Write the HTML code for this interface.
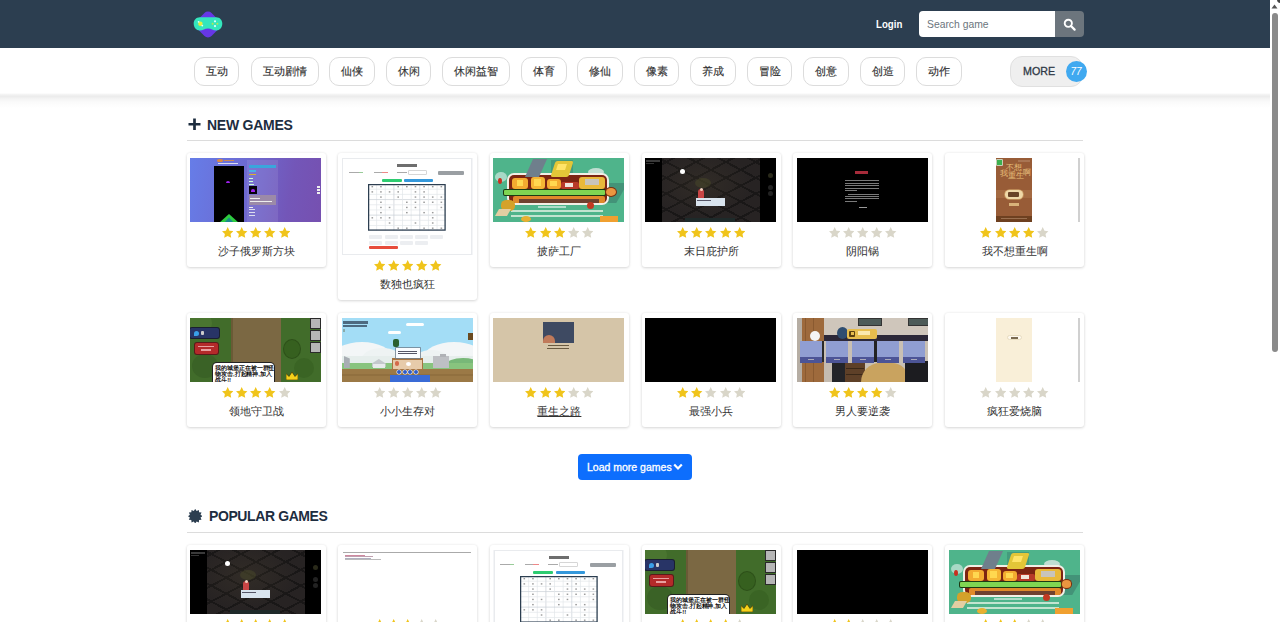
<!DOCTYPE html><html><head><meta charset="utf-8"><title>Games</title><style>
*{box-sizing:border-box}
html,body{margin:0;padding:0}
body{width:1280px;height:622px;overflow:hidden;position:relative;background:#fff;font-family:"Liberation Sans",sans-serif;}
i{position:absolute;display:block}
.nav{position:absolute;left:0;top:0;width:1270px;height:48px;background:#2c3e50}
.login{position:absolute;left:876px;top:18px;font-size:10.5px;font-weight:bold;color:#fff;transform:scaleX(.92);transform-origin:0 0}
.search{position:absolute;left:919px;top:11px;width:136px;height:26px;background:#fff;border-radius:4px 0 0 4px}
.search span{position:absolute;left:8px;top:6.5px;font-size:11px;color:#6c757d;transform:scaleX(.94);transform-origin:0 0}
.sbtn{position:absolute;left:1055px;top:11px;width:28.5px;height:26px;background:#6c757d;border-radius:0 4px 4px 0}
.cats{position:absolute;left:0;top:48px;width:1270px;height:47px;background:#fff}
.shadow{position:absolute;left:0;top:93px;width:1270px;height:15px;background:linear-gradient(#fff 0px,#f0f0f0 2px,#ececec 3.5px,#f4f4f4 6px,#fafafa 9px,#fff 15px)}
.tag{position:absolute;top:57px;height:29px;border:1px solid #dcdcdc;border-radius:10px;font-size:10.6px;color:#333;-webkit-text-stroke:.15px #333;text-align:center;line-height:27px;background:#fff}
.more{position:absolute;left:1010px;top:56px;width:73px;height:30.5px;border:1px solid #e0e0e0;border-radius:12px;background:#efefef;font-size:12px;color:#333}
.more span{position:absolute;left:12px;top:7.6px;font-size:10.7px;color:#2f3946;-webkit-text-stroke:.3px #2f3946}
.badge{position:absolute;left:1065.5px;top:61px;width:21px;height:21px;border-radius:50%;background:#40a9f0;color:#fff;font-size:10px;font-style:italic;text-align:center;line-height:21px}
.h{position:absolute;font-size:14px;font-weight:bold;color:#1d2d3f;letter-spacing:-0.25px}
.hr{position:absolute;left:187px;width:896px;height:1px;background:#dcdcdc}
.card{position:absolute;width:139px;background:#fff;border-radius:3px;box-shadow:0 1px 3px rgba(0,0,0,.14),0 0 3px rgba(0,0,0,.06)}
.th{position:absolute;left:3.6px;top:5px;width:131px;overflow:hidden}
.st{position:absolute;left:0;right:0;height:11px;text-align:center;font-size:0;line-height:0}
.st svg{margin:0 1.4px}
.tt{position:absolute;left:0;right:0;text-align:center;font-size:11px;color:#333;line-height:14px}
.u{text-decoration:underline}
.lm{position:absolute;left:578px;top:454px;width:113.5px;height:26px;background:#0d6efd;border-radius:4px;color:#fff;font-size:10.5px}
.lm span{position:absolute;left:9px;top:6.5px;letter-spacing:0px;-webkit-text-stroke:.3px #fff}
.sb{position:absolute;left:1270px;top:0;width:10px;height:622px;background:#fff}
</style></head><body><div class="nav"></div><svg style="position:absolute;left:192px;top:9px" width="32" height="31" viewBox="0 0 32 31">
<rect x="5.4" y="4.9" width="21.2" height="21.2" rx="5" ry="5" transform="rotate(45 16 15.5)" fill="#6637e6"/>
<path d="M7.8 8.2 H24.2 C27.9 8.2 30.3 11.1 30.3 14.6 C30.3 18.4 27.8 21.6 24.3 21.6 C20.8 21.6 19.5 19.4 16 19.4 C12.5 19.4 11.2 21.6 7.7 21.6 C4.2 21.6 1.7 18.4 1.7 14.6 C1.7 11.1 4.1 8.2 7.8 8.2Z" fill="#34e6bd"/>
<circle cx="8.4" cy="14.7" r="2.2" fill="#e6ee3a"/><circle cx="6.6" cy="12.8" r=".9" fill="#dff"/><circle cx="10.3" cy="16.6" r=".9" fill="#dff"/>
<circle cx="23" cy="12.3" r="1.1" fill="#dff"/><circle cx="23" cy="17.1" r="1.1" fill="#dff"/><circle cx="20.6" cy="14.7" r="1" fill="#b8e850"/><circle cx="25.4" cy="14.7" r="1" fill="#b8e850"/>
</svg><div class="login">Login</div><div class="search"><span>Search game</span></div><div class="sbtn"><svg style="position:absolute;left:8px;top:7px" width="13" height="13" viewBox="0 0 13 13"><circle cx="5.3" cy="5.3" r="3.6" fill="none" stroke="#fff" stroke-width="1.9"/><path d="M8 8l3.6 3.6" stroke="#fff" stroke-width="2.2" stroke-linecap="round"/></svg></div><div class="cats"></div><div class="shadow"></div><div class="tag" style="left:194px;width:45px">互动</div><div class="tag" style="left:250.5px;width:68px">互动剧情</div><div class="tag" style="left:329px;width:45.5px">仙侠</div><div class="tag" style="left:386px;width:45px">休闲</div><div class="tag" style="left:442px;width:68px">休闲益智</div><div class="tag" style="left:521px;width:45.5px">体育</div><div class="tag" style="left:577px;width:45.5px">修仙</div><div class="tag" style="left:634px;width:45px">像素</div><div class="tag" style="left:690px;width:45.5px">养成</div><div class="tag" style="left:747px;width:45px">冒险</div><div class="tag" style="left:803px;width:45.5px">创意</div><div class="tag" style="left:860px;width:45px">创造</div><div class="tag" style="left:916px;width:45.5px">动作</div><div class="more"><span>MORE</span></div><div class="badge">77</div><svg style="position:absolute;left:187.5px;top:118px" width="13" height="12.5" viewBox="0 0 13 12.5"><path d="M6.5 0.5V12M0.5 6.25H12.5" stroke="#1d2d3f" stroke-width="2.7"/></svg><div class="h" style="left:207px;top:116.5px">NEW GAMES</div><div class="hr" style="top:140px"></div><div class="card" style="left:186.5px;top:153px;height:113.5px"><div class="th" style="height:64px"><div style="position:absolute;inset:0;background:linear-gradient(100deg,#667de8 0%,#6d6bd2 40%,#7356b8 75%,#7650b0 100%)"></div><i style="left:24px;top:8px;width:30px;height:56px;background:#000;"></i><i style="left:56.5px;top:1.5px;width:31px;height:62px;background:rgba(255,255,255,.09);"></i><i style="left:58.5px;top:6.5px;width:27px;height:3.3px;background:#3aa6dc;"></i><i style="left:58.5px;top:11.5px;width:7px;height:2px;background:#4ab0e8;"></i><i style="left:58.5px;top:15.5px;width:7px;height:1.5px;background:#d8b030;"></i><i style="left:58.5px;top:19.5px;width:4px;height:1px;background:#cfd;"></i><i style="left:58.5px;top:22.5px;width:4px;height:1px;background:#cfd;"></i><i style="left:58.5px;top:25.5px;width:5px;height:1px;background:#cfd;"></i><i style="left:58.5px;top:27.5px;width:8.5px;height:8.3px;background:#05020a;"></i><i style="left:61px;top:31px;width:4px;height:2.5px;background:#a020f0;border-radius:2px 2px 0 0"></i><i style="left:58.5px;top:37.2px;width:27px;height:9.5px;background:#9c8aa8;"></i><i style="left:60px;top:39.5px;width:10px;height:1.2px;background:#eee;"></i><i style="left:60px;top:42.5px;width:22px;height:1.2px;background:#eee;"></i><i style="left:58.5px;top:48.5px;width:4px;height:1px;background:#eee;"></i><i style="left:58.5px;top:51px;width:6px;height:1px;background:#dde;"></i><i style="left:58.5px;top:54px;width:6px;height:1px;background:#dde;"></i><i style="left:58.5px;top:57px;width:6px;height:1px;background:#dde;"></i><i style="left:35.5px;top:22.5px;width:4.5px;height:2.5px;background:#a020f0;border-radius:2px 2px 0 0"></i><svg style="position:absolute;left:29px;top:55.5px" width="20" height="9"><path d="M10 0L20 9H0z" fill="#2ecc40"/><path d="M10 3.5L15 9H5z" fill="#1a8a8a"/></svg><i style="left:27px;top:1px;width:6px;height:3px;background:#e08a40;border-radius:50%"></i><i style="left:34px;top:1.5px;width:10px;height:1.5px;background:#d08a50;"></i><i style="left:28px;top:4.5px;width:20px;height:0.8px;background:#dde;"></i><i style="left:127px;top:28px;width:3px;height:1.5px;background:#eee;"></i><i style="left:127px;top:31px;width:3px;height:1.5px;background:#eee;"></i><i style="left:127px;top:34px;width:3px;height:1.5px;background:#eee;"></i></div><div class="st" style="top:74px"><svg width="11.4" height="11" viewBox="0 0 24 23"><path d="M12 0l3.7 7.6 8.3 1.1-6.1 5.8 1.5 8.3L12 18.8l-7.4 4 1.5-8.3L0 8.7l8.3-1.1z" fill="#f0c41b"/></svg><svg width="11.4" height="11" viewBox="0 0 24 23"><path d="M12 0l3.7 7.6 8.3 1.1-6.1 5.8 1.5 8.3L12 18.8l-7.4 4 1.5-8.3L0 8.7l8.3-1.1z" fill="#f0c41b"/></svg><svg width="11.4" height="11" viewBox="0 0 24 23"><path d="M12 0l3.7 7.6 8.3 1.1-6.1 5.8 1.5 8.3L12 18.8l-7.4 4 1.5-8.3L0 8.7l8.3-1.1z" fill="#f0c41b"/></svg><svg width="11.4" height="11" viewBox="0 0 24 23"><path d="M12 0l3.7 7.6 8.3 1.1-6.1 5.8 1.5 8.3L12 18.8l-7.4 4 1.5-8.3L0 8.7l8.3-1.1z" fill="#f0c41b"/></svg><svg width="11.4" height="11" viewBox="0 0 24 23"><path d="M12 0l3.7 7.6 8.3 1.1-6.1 5.8 1.5 8.3L12 18.8l-7.4 4 1.5-8.3L0 8.7l8.3-1.1z" fill="#f0c41b"/></svg></div><div class="tt" style="top:91px">沙子俄罗斯方块</div></div><div class="card" style="left:338.2px;top:153px;height:146.5px"><div class="th" style="height:97px"><div style="position:absolute;inset:0;background:#f4f5f7"></div><i style="left:1.5px;top:1px;width:127.5px;height:94.5px;background:#fff;box-shadow:0 0 0 1px #e9ebee"></i><i style="left:55.5px;top:6px;width:20px;height:3px;background:#555;opacity:.85"></i><i style="left:7px;top:14px;width:10px;height:1.2px;background:#aaa;"></i><i style="left:17px;top:14px;width:4px;height:1.2px;background:#9c9;"></i><i style="left:32px;top:14px;width:8px;height:1.2px;background:#aaa;"></i><i style="left:40px;top:14px;width:6px;height:1.2px;background:#e88;"></i><i style="left:55px;top:13.8px;width:10px;height:1.2px;background:#aaa;"></i><i style="left:67px;top:12.8px;width:17px;height:3.5px;background:#fff;box-shadow:0 0 0 .6px #bbb"></i><i style="left:96.7px;top:13.4px;width:26px;height:3.3px;background:#9a9fa3;border-radius:1px"></i><i style="left:40px;top:20.7px;width:20px;height:3.4px;background:#2ecc71;border-radius:1px"></i><i style="left:62.4px;top:20.7px;width:28.7px;height:3.4px;background:#3498db;border-radius:1px"></i><svg style="position:absolute;left:26.6px;top:26.3px" width="77.7" height="46.7" viewBox="0 0 77.7 46.7"><rect width="77.7" height="46.7" fill="#fff"/><line x1="8.63" y1="0" x2="8.63" y2="46.7" stroke="#e3e6ea" stroke-width=".7"/><line x1="0" y1="5.19" x2="77.7" y2="5.19" stroke="#e3e6ea" stroke-width=".7"/><line x1="17.27" y1="0" x2="17.27" y2="46.7" stroke="#e3e6ea" stroke-width=".7"/><line x1="0" y1="10.38" x2="77.7" y2="10.38" stroke="#e3e6ea" stroke-width=".7"/><line x1="25.90" y1="0" x2="25.90" y2="46.7" stroke="#c9ced6" stroke-width=".7"/><line x1="0" y1="15.57" x2="77.7" y2="15.57" stroke="#c9ced6" stroke-width=".7"/><line x1="34.53" y1="0" x2="34.53" y2="46.7" stroke="#e3e6ea" stroke-width=".7"/><line x1="0" y1="20.76" x2="77.7" y2="20.76" stroke="#e3e6ea" stroke-width=".7"/><line x1="43.17" y1="0" x2="43.17" y2="46.7" stroke="#e3e6ea" stroke-width=".7"/><line x1="0" y1="25.94" x2="77.7" y2="25.94" stroke="#e3e6ea" stroke-width=".7"/><line x1="51.80" y1="0" x2="51.80" y2="46.7" stroke="#c9ced6" stroke-width=".7"/><line x1="0" y1="31.13" x2="77.7" y2="31.13" stroke="#c9ced6" stroke-width=".7"/><line x1="60.43" y1="0" x2="60.43" y2="46.7" stroke="#e3e6ea" stroke-width=".7"/><line x1="0" y1="36.32" x2="77.7" y2="36.32" stroke="#e3e6ea" stroke-width=".7"/><line x1="69.07" y1="0" x2="69.07" y2="46.7" stroke="#e3e6ea" stroke-width=".7"/><line x1="0" y1="41.51" x2="77.7" y2="41.51" stroke="#e3e6ea" stroke-width=".7"/><rect x="0.6" y="0.6" width="76.5" height="45.5" fill="none" stroke="#2c3e50" stroke-width="1.3"/><rect x="3.50" y="2.00" width="1.6" height="1.4" fill="#9a9a9a"/><rect x="12.13" y="2.00" width="1.6" height="1.4" fill="#9a9a9a"/><rect x="29.40" y="2.00" width="1.6" height="1.4" fill="#9a9a9a"/><rect x="38.03" y="2.00" width="1.6" height="1.4" fill="#9a9a9a"/><rect x="46.67" y="2.00" width="1.6" height="1.4" fill="#9a9a9a"/><rect x="55.30" y="2.00" width="1.6" height="1.4" fill="#9a9a9a"/><rect x="63.93" y="2.00" width="1.6" height="1.4" fill="#9a9a9a"/><rect x="72.57" y="2.00" width="1.6" height="1.4" fill="#9a9a9a"/><rect x="3.50" y="7.19" width="1.6" height="1.4" fill="#9a9a9a"/><rect x="12.13" y="7.19" width="1.6" height="1.4" fill="#9a9a9a"/><rect x="20.77" y="7.19" width="1.6" height="1.4" fill="#9a9a9a"/><rect x="29.40" y="7.19" width="1.6" height="1.4" fill="#9a9a9a"/><rect x="46.67" y="7.19" width="1.6" height="1.4" fill="#9a9a9a"/><rect x="55.30" y="7.19" width="1.6" height="1.4" fill="#9a9a9a"/><rect x="12.13" y="12.38" width="1.6" height="1.4" fill="#9a9a9a"/><rect x="29.40" y="12.38" width="1.6" height="1.4" fill="#9a9a9a"/><rect x="46.67" y="12.38" width="1.6" height="1.4" fill="#9a9a9a"/><rect x="55.30" y="12.38" width="1.6" height="1.4" fill="#9a9a9a"/><rect x="63.93" y="12.38" width="1.6" height="1.4" fill="#9a9a9a"/><rect x="72.57" y="12.38" width="1.6" height="1.4" fill="#9a9a9a"/><rect x="12.13" y="17.57" width="1.6" height="1.4" fill="#9a9a9a"/><rect x="38.03" y="17.57" width="1.6" height="1.4" fill="#9a9a9a"/><rect x="46.67" y="17.57" width="1.6" height="1.4" fill="#9a9a9a"/><rect x="55.30" y="17.57" width="1.6" height="1.4" fill="#9a9a9a"/><rect x="63.93" y="17.57" width="1.6" height="1.4" fill="#9a9a9a"/><rect x="72.57" y="17.57" width="1.6" height="1.4" fill="#9a9a9a"/><rect x="12.13" y="22.76" width="1.6" height="1.4" fill="#9a9a9a"/><rect x="20.77" y="22.76" width="1.6" height="1.4" fill="#9a9a9a"/><rect x="38.03" y="22.76" width="1.6" height="1.4" fill="#9a9a9a"/><rect x="46.67" y="22.76" width="1.6" height="1.4" fill="#9a9a9a"/><rect x="72.57" y="22.76" width="1.6" height="1.4" fill="#9a9a9a"/><rect x="12.13" y="27.94" width="1.6" height="1.4" fill="#9a9a9a"/><rect x="38.03" y="27.94" width="1.6" height="1.4" fill="#9a9a9a"/><rect x="55.30" y="27.94" width="1.6" height="1.4" fill="#9a9a9a"/><rect x="63.93" y="27.94" width="1.6" height="1.4" fill="#9a9a9a"/><rect x="3.50" y="33.13" width="1.6" height="1.4" fill="#9a9a9a"/><rect x="12.13" y="33.13" width="1.6" height="1.4" fill="#9a9a9a"/><rect x="20.77" y="33.13" width="1.6" height="1.4" fill="#9a9a9a"/><rect x="63.93" y="33.13" width="1.6" height="1.4" fill="#9a9a9a"/><rect x="20.77" y="38.32" width="1.6" height="1.4" fill="#9a9a9a"/><rect x="46.67" y="38.32" width="1.6" height="1.4" fill="#9a9a9a"/><rect x="63.93" y="38.32" width="1.6" height="1.4" fill="#9a9a9a"/><rect x="29.40" y="43.51" width="1.6" height="1.4" fill="#9a9a9a"/><rect x="38.03" y="43.51" width="1.6" height="1.4" fill="#9a9a9a"/><rect x="55.30" y="43.51" width="1.6" height="1.4" fill="#9a9a9a"/><rect x="63.93" y="43.51" width="1.6" height="1.4" fill="#9a9a9a"/><rect x="72.57" y="43.51" width="1.6" height="1.4" fill="#9a9a9a"/></svg><i style="left:27.7px;top:77px;width:13px;height:3.8px;background:#eceef1;border-radius:1px"></i><i style="left:42.9px;top:77px;width:13px;height:3.8px;background:#eceef1;border-radius:1px"></i><i style="left:58.099999999999994px;top:77px;width:13px;height:3.8px;background:#eceef1;border-radius:1px"></i><i style="left:73.3px;top:77px;width:13px;height:3.8px;background:#eceef1;border-radius:1px"></i><i style="left:88.5px;top:77px;width:13px;height:3.8px;background:#eceef1;border-radius:1px"></i><i style="left:27.7px;top:82.5px;width:13px;height:4px;background:#eceef1;border-radius:1px"></i><i style="left:42.9px;top:82.5px;width:13px;height:4px;background:#eceef1;border-radius:1px"></i><i style="left:58.099999999999994px;top:82.5px;width:13px;height:4px;background:#eceef1;border-radius:1px"></i><i style="left:73.3px;top:82.5px;width:13px;height:4px;background:#eceef1;border-radius:1px"></i><i style="left:27.7px;top:87.9px;width:29px;height:3.1px;background:#e74c3c;border-radius:1px"></i></div><div class="st" style="top:107px"><svg width="11.4" height="11" viewBox="0 0 24 23"><path d="M12 0l3.7 7.6 8.3 1.1-6.1 5.8 1.5 8.3L12 18.8l-7.4 4 1.5-8.3L0 8.7l8.3-1.1z" fill="#f0c41b"/></svg><svg width="11.4" height="11" viewBox="0 0 24 23"><path d="M12 0l3.7 7.6 8.3 1.1-6.1 5.8 1.5 8.3L12 18.8l-7.4 4 1.5-8.3L0 8.7l8.3-1.1z" fill="#f0c41b"/></svg><svg width="11.4" height="11" viewBox="0 0 24 23"><path d="M12 0l3.7 7.6 8.3 1.1-6.1 5.8 1.5 8.3L12 18.8l-7.4 4 1.5-8.3L0 8.7l8.3-1.1z" fill="#f0c41b"/></svg><svg width="11.4" height="11" viewBox="0 0 24 23"><path d="M12 0l3.7 7.6 8.3 1.1-6.1 5.8 1.5 8.3L12 18.8l-7.4 4 1.5-8.3L0 8.7l8.3-1.1z" fill="#f0c41b"/></svg><svg width="11.4" height="11" viewBox="0 0 24 23"><path d="M12 0l3.7 7.6 8.3 1.1-6.1 5.8 1.5 8.3L12 18.8l-7.4 4 1.5-8.3L0 8.7l8.3-1.1z" fill="#f0c41b"/></svg></div><div class="tt" style="top:124px">数独也疯狂</div></div><div class="card" style="left:489.9px;top:153px;height:113.5px"><div class="th" style="height:64px"><div style="position:absolute;inset:0;background:#4fb48b"></div><i style="left:105px;top:25px;width:24px;height:20px;background:#3f8470;opacity:.7;transform:skewX(-30deg)"></i><i style="left:58px;top:2px;width:22px;height:14px;background:#3e8a74;opacity:.6"></i><i style="left:2px;top:14px;width:12px;height:10px;background:#cfe8e0;border-radius:50%;opacity:.7"></i><i style="left:95px;top:10px;width:16px;height:8px;background:#dce8e4;border-radius:50%;opacity:.8"></i><i style="left:14px;top:15px;width:102px;height:32px;background:#f2efe6;border-radius:7px"></i><i style="left:16px;top:17px;width:98px;height:28px;background:#7c2412;border-radius:5px"></i><i style="left:19px;top:20px;width:16px;height:11px;background:#f3ab30;border-radius:3px"></i><i style="left:24px;top:22px;width:6px;height:6px;background:#ffd850;"></i><i style="left:38px;top:19px;width:14px;height:12px;background:#f5b634;border-radius:3px"></i><i style="left:41px;top:21px;width:7px;height:7px;background:#ffd850;"></i><i style="left:54px;top:21px;width:14px;height:10px;background:#f3ab30;border-radius:3px"></i><i style="left:57px;top:23px;width:7px;height:5px;background:#ffd850;"></i><i style="left:68px;top:24px;width:18px;height:7px;background:#b83a28;border-radius:2px"></i><i style="left:72px;top:25px;width:8px;height:4px;background:#f0e6dc;"></i><i style="left:86px;top:19px;width:26px;height:12px;background:#e9b93a;border-radius:3px"></i><i style="left:92px;top:21px;width:14px;height:6px;background:#c8c4bc;"></i><i style="left:20px;top:38px;width:92px;height:7px;background:#e08a2a;border-radius:2px"></i><i style="left:26px;top:41px;width:80px;height:3.6px;background:#5a3430;opacity:.85"></i><i style="left:36px;top:1px;width:14px;height:18px;background:#6f7f8c;transform:skewX(-24deg)"></i><i style="left:60px;top:3px;width:18px;height:16px;background:#e3c638;transform:skewX(-18deg);border-radius:2px"></i><i style="left:64px;top:6px;width:9px;height:6px;background:#ffe468;transform:skewX(-18deg)"></i><i style="left:11px;top:31.6px;width:101px;height:5.8px;background:#7fd552;box-shadow:0 0 0 1px #1d3a12;border-radius:1px"></i><i style="left:113px;top:30px;width:9.8px;height:7.8px;border-radius:50%;background:#eb9640;box-shadow:0 0 0 1px #7a3010"></i><i style="left:45px;top:47.5px;width:28px;height:2.6px;background:#fff;opacity:.55"></i><i style="left:18px;top:51.5px;width:92px;height:2.4px;background:#f0f6ea;opacity:.72"></i><i style="left:18px;top:56.5px;width:92px;height:2.4px;background:#f0f6ea;opacity:.72"></i><i style="left:8px;top:42px;width:14px;height:11px;background:#d4a22a;border-radius:40%"></i><i style="left:4px;top:51px;width:12px;height:7px;background:#e4cea2;transform:skewX(-30deg)"></i><i style="left:5px;top:20px;width:4px;height:6px;background:#c83020;border-radius:50%"></i><i style="left:94px;top:44px;width:7px;height:7px;background:#c23a22;border-radius:50%"></i><i style="left:28px;top:58px;width:10px;height:6px;background:#e8b030;border-radius:50%"></i><i style="left:106.5px;top:58.2px;width:18px;height:5.4px;background:#f0a030;"></i></div><div class="st" style="top:74px"><svg width="11.4" height="11" viewBox="0 0 24 23"><path d="M12 0l3.7 7.6 8.3 1.1-6.1 5.8 1.5 8.3L12 18.8l-7.4 4 1.5-8.3L0 8.7l8.3-1.1z" fill="#f0c41b"/></svg><svg width="11.4" height="11" viewBox="0 0 24 23"><path d="M12 0l3.7 7.6 8.3 1.1-6.1 5.8 1.5 8.3L12 18.8l-7.4 4 1.5-8.3L0 8.7l8.3-1.1z" fill="#f0c41b"/></svg><svg width="11.4" height="11" viewBox="0 0 24 23"><path d="M12 0l3.7 7.6 8.3 1.1-6.1 5.8 1.5 8.3L12 18.8l-7.4 4 1.5-8.3L0 8.7l8.3-1.1z" fill="#f0c41b"/></svg><svg width="11.4" height="11" viewBox="0 0 24 23"><path d="M12 0l3.7 7.6 8.3 1.1-6.1 5.8 1.5 8.3L12 18.8l-7.4 4 1.5-8.3L0 8.7l8.3-1.1z" fill="#d9d6c9"/></svg><svg width="11.4" height="11" viewBox="0 0 24 23"><path d="M12 0l3.7 7.6 8.3 1.1-6.1 5.8 1.5 8.3L12 18.8l-7.4 4 1.5-8.3L0 8.7l8.3-1.1z" fill="#d9d6c9"/></svg></div><div class="tt" style="top:91px">披萨工厂</div></div><div class="card" style="left:641.5999999999999px;top:153px;height:113.5px"><div class="th" style="height:64px"><div style="position:absolute;inset:0;background:#000"></div><i style="left:17px;top:0px;width:98px;height:63.6px;background:#272323;"></i><i style="left:17px;top:0px;width:98px;height:63.6px;background:repeating-linear-gradient(28deg,transparent 0 12px,#151313 12px 14px),repeating-linear-gradient(-28deg,transparent 0 12px,#151313 12px 14px);opacity:.75"></i><i style="left:17px;top:0px;width:98px;height:63.6px;background:radial-gradient(ellipse at 40% 40%,rgba(80,70,50,.25),transparent 60%);"></i><i style="left:50px;top:20px;width:16px;height:10px;background:#4a4a2a;opacity:.5;border-radius:50%"></i><i style="left:50.5px;top:39.6px;width:29px;height:8.4px;background:#d9e4ee;"></i><i style="left:52px;top:41.5px;width:14px;height:1px;background:#556;"></i><i style="left:53px;top:31px;width:6px;height:8.5px;background:#c84545;border-radius:3px 3px 0 0"></i><i style="left:54.5px;top:29.5px;width:3px;height:3px;background:#f0d0c0;border-radius:50%"></i><i style="left:34.5px;top:10.5px;width:5px;height:5px;background:#fff;border-radius:50%"></i><i style="left:1px;top:1.5px;width:14px;height:2px;background:#3a3a3a;"></i><i style="left:1px;top:4.5px;width:8px;height:1.5px;background:#333;"></i><i style="left:123px;top:15px;width:5px;height:5px;background:#2a2a1a;border-radius:50%"></i><i style="left:123px;top:27px;width:5px;height:5px;background:#222;border-radius:50%"></i><i style="left:123px;top:33px;width:5px;height:5px;background:#222;border-radius:50%"></i><i style="left:40px;top:60px;width:50px;height:3.6px;background:#1e2a2a;"></i></div><div class="st" style="top:74px"><svg width="11.4" height="11" viewBox="0 0 24 23"><path d="M12 0l3.7 7.6 8.3 1.1-6.1 5.8 1.5 8.3L12 18.8l-7.4 4 1.5-8.3L0 8.7l8.3-1.1z" fill="#f0c41b"/></svg><svg width="11.4" height="11" viewBox="0 0 24 23"><path d="M12 0l3.7 7.6 8.3 1.1-6.1 5.8 1.5 8.3L12 18.8l-7.4 4 1.5-8.3L0 8.7l8.3-1.1z" fill="#f0c41b"/></svg><svg width="11.4" height="11" viewBox="0 0 24 23"><path d="M12 0l3.7 7.6 8.3 1.1-6.1 5.8 1.5 8.3L12 18.8l-7.4 4 1.5-8.3L0 8.7l8.3-1.1z" fill="#f0c41b"/></svg><svg width="11.4" height="11" viewBox="0 0 24 23"><path d="M12 0l3.7 7.6 8.3 1.1-6.1 5.8 1.5 8.3L12 18.8l-7.4 4 1.5-8.3L0 8.7l8.3-1.1z" fill="#f0c41b"/></svg><svg width="11.4" height="11" viewBox="0 0 24 23"><path d="M12 0l3.7 7.6 8.3 1.1-6.1 5.8 1.5 8.3L12 18.8l-7.4 4 1.5-8.3L0 8.7l8.3-1.1z" fill="#f0c41b"/></svg></div><div class="tt" style="top:91px">末日庇护所</div></div><div class="card" style="left:793.3px;top:153px;height:113.5px"><div class="th" style="height:64px"><div style="position:absolute;inset:0;background:#000"></div><i style="left:58.5px;top:13px;width:13px;height:3px;background:#b83040;opacity:.9"></i><i style="left:48px;top:22.3px;width:34px;height:0.9px;background:#7a7a7a;"></i><i style="left:48px;top:24.7px;width:34px;height:0.9px;background:#7a7a7a;"></i><i style="left:48px;top:27.1px;width:34px;height:0.9px;background:#7a7a7a;"></i><i style="left:48px;top:29.5px;width:34px;height:0.9px;background:#7a7a7a;"></i><i style="left:48px;top:31.9px;width:12px;height:0.9px;background:#7a7a7a;"></i><i style="left:51px;top:35.5px;width:31px;height:0.9px;background:#7a7a7a;"></i><i style="left:48px;top:37.9px;width:34px;height:0.9px;background:#7a7a7a;"></i><i style="left:48px;top:40.3px;width:34px;height:0.9px;background:#7a7a7a;"></i><i style="left:48px;top:42.7px;width:12px;height:0.9px;background:#7a7a7a;"></i><i style="left:62px;top:48.5px;width:8px;height:1.4px;background:#9a9a9a;"></i></div><div class="st" style="top:74px"><svg width="11.4" height="11" viewBox="0 0 24 23"><path d="M12 0l3.7 7.6 8.3 1.1-6.1 5.8 1.5 8.3L12 18.8l-7.4 4 1.5-8.3L0 8.7l8.3-1.1z" fill="#d9d6c9"/></svg><svg width="11.4" height="11" viewBox="0 0 24 23"><path d="M12 0l3.7 7.6 8.3 1.1-6.1 5.8 1.5 8.3L12 18.8l-7.4 4 1.5-8.3L0 8.7l8.3-1.1z" fill="#d9d6c9"/></svg><svg width="11.4" height="11" viewBox="0 0 24 23"><path d="M12 0l3.7 7.6 8.3 1.1-6.1 5.8 1.5 8.3L12 18.8l-7.4 4 1.5-8.3L0 8.7l8.3-1.1z" fill="#d9d6c9"/></svg><svg width="11.4" height="11" viewBox="0 0 24 23"><path d="M12 0l3.7 7.6 8.3 1.1-6.1 5.8 1.5 8.3L12 18.8l-7.4 4 1.5-8.3L0 8.7l8.3-1.1z" fill="#d9d6c9"/></svg><svg width="11.4" height="11" viewBox="0 0 24 23"><path d="M12 0l3.7 7.6 8.3 1.1-6.1 5.8 1.5 8.3L12 18.8l-7.4 4 1.5-8.3L0 8.7l8.3-1.1z" fill="#d9d6c9"/></svg></div><div class="tt" style="top:91px">阴阳锅</div></div><div class="card" style="left:945.0px;top:153px;height:113.5px"><div class="th" style="height:64px"><div style="position:absolute;inset:0;background:#fff"></div><div style="position:absolute;left:47px;top:0;width:36px;height:64px;background:#985c37"><i style="left:1.5px;top:1.5px;width:5px;height:5.5px;background:#3cb050;box-shadow:0 0 0 .7px #dfe"></i><i style="left:22px;top:1.5px;width:12px;height:2px;background:#b08060;opacity:.7"></i><div style="position:absolute;left:0;top:5px;width:36px;height:20px;font-family:'Liberation Serif',serif;color:#e7bf7a;font-size:7.5px;line-height:8px;white-space:nowrap"><span style="position:absolute;left:10px;top:1px">不想</span><span style="position:absolute;left:4px;top:7px">我</span><span style="position:absolute;left:12px;top:9px">重生</span><span style="position:absolute;left:27px;top:6px">啊</span></div><i style="left:0px;top:32px;width:36px;height:8px;background:#a46a42;"></i><i style="left:9px;top:31.5px;width:18px;height:9px;background:#f0d9a8;border-radius:5px;box-shadow:0 0 0 .8px #c89860"></i><i style="left:12.5px;top:33.5px;width:11px;height:5px;background:#6a4426;border-radius:1px"></i><i style="left:13.5px;top:45px;width:10px;height:3px;background:#e9c88a;opacity:.8"></i><i style="left:0px;top:58px;width:36px;height:5.6px;background:#6e4020;"></i><i style="left:5px;top:59.8px;width:26px;height:1.5px;background:#b89070;opacity:.6"></i></div><i style="left:129.5px;top:0px;width:1.5px;height:64px;background:#d0d0d0;"></i></div><div class="st" style="top:74px"><svg width="11.4" height="11" viewBox="0 0 24 23"><path d="M12 0l3.7 7.6 8.3 1.1-6.1 5.8 1.5 8.3L12 18.8l-7.4 4 1.5-8.3L0 8.7l8.3-1.1z" fill="#f0c41b"/></svg><svg width="11.4" height="11" viewBox="0 0 24 23"><path d="M12 0l3.7 7.6 8.3 1.1-6.1 5.8 1.5 8.3L12 18.8l-7.4 4 1.5-8.3L0 8.7l8.3-1.1z" fill="#f0c41b"/></svg><svg width="11.4" height="11" viewBox="0 0 24 23"><path d="M12 0l3.7 7.6 8.3 1.1-6.1 5.8 1.5 8.3L12 18.8l-7.4 4 1.5-8.3L0 8.7l8.3-1.1z" fill="#f0c41b"/></svg><svg width="11.4" height="11" viewBox="0 0 24 23"><path d="M12 0l3.7 7.6 8.3 1.1-6.1 5.8 1.5 8.3L12 18.8l-7.4 4 1.5-8.3L0 8.7l8.3-1.1z" fill="#f0c41b"/></svg><svg width="11.4" height="11" viewBox="0 0 24 23"><path d="M12 0l3.7 7.6 8.3 1.1-6.1 5.8 1.5 8.3L12 18.8l-7.4 4 1.5-8.3L0 8.7l8.3-1.1z" fill="#d9d6c9"/></svg></div><div class="tt" style="top:91px">我不想重生啊</div></div><div class="card" style="left:186.5px;top:313px;height:113.5px"><div class="th" style="height:64px"><div style="position:absolute;inset:0;background:#416c2a"></div><i style="left:-4px;top:-6px;width:26px;height:22px;border-radius:50%;background:#4a7530"></i><i style="left:2px;top:36px;width:26px;height:24px;border-radius:50%;background:#3a6226"></i><i style="left:40.5px;top:0px;width:50px;height:64px;background:#7b6843;"></i><i style="left:40.5px;top:0px;width:2px;height:64px;background:#6a5a36;"></i><i style="left:94px;top:22px;width:16px;height:18px;border-radius:50%;background:#36601f;box-shadow:0 0 0 1px #2d5019"></i><i style="left:104px;top:40px;width:20px;height:20px;border-radius:50%;background:#3a6424"></i><i style="left:0px;top:9.8px;width:29px;height:10.5px;background:#283466;border-radius:2px;box-shadow:0 0 0 1px #1a1f30"></i><i style="left:3.5px;top:12.5px;width:5px;height:5px;border-radius:50% 50% 50% 0;background:#3aa0e8"></i><i style="left:11px;top:13px;width:2.5px;height:4px;background:#ccc;border-radius:1px"></i><i style="left:4.5px;top:24.6px;width:23.5px;height:11.2px;background:#b42a2a;border-radius:2px;box-shadow:0 0 0 1px #5a1a1a"></i><i style="left:8px;top:27.5px;width:16px;height:1.5px;background:#e8a0a0;"></i><i style="left:11px;top:31px;width:10px;height:1.5px;background:#e8a0a0;"></i><div style="position:absolute;left:22.8px;top:44.6px;width:61px;height:22px;background:#fff;border-radius:4px;box-shadow:0 0 0 1px #222;font-size:6px;line-height:6.2px;color:#111;padding:2px 0 0 2.5px;font-weight:bold;letter-spacing:-.1px;overflow:hidden;white-space:nowrap">我的城堡正在被一群怪<br>物攻击,打起精神,加入<br>战斗!!</div><svg style="position:absolute;left:95.5px;top:53.5px" width="12" height="8" viewBox="0 0 12 8"><path d="M0 1.5l3 3 3-4.5 3 4.5 3-3V8H0z" fill="#f5d21a" stroke="#3a2a00" stroke-width=".6"/></svg><i style="left:120.5px;top:0.5px;width:9px;height:9px;background:#b6b6b6;box-shadow:0 0 0 1px #2a2a2a"></i><i style="left:120.5px;top:12.5px;width:9px;height:9px;background:#b6b6b6;box-shadow:0 0 0 1px #2a2a2a"></i><i style="left:120.5px;top:24.5px;width:9px;height:9px;background:#b6b6b6;box-shadow:0 0 0 1px #2a2a2a"></i></div><div class="st" style="top:74px"><svg width="11.4" height="11" viewBox="0 0 24 23"><path d="M12 0l3.7 7.6 8.3 1.1-6.1 5.8 1.5 8.3L12 18.8l-7.4 4 1.5-8.3L0 8.7l8.3-1.1z" fill="#f0c41b"/></svg><svg width="11.4" height="11" viewBox="0 0 24 23"><path d="M12 0l3.7 7.6 8.3 1.1-6.1 5.8 1.5 8.3L12 18.8l-7.4 4 1.5-8.3L0 8.7l8.3-1.1z" fill="#f0c41b"/></svg><svg width="11.4" height="11" viewBox="0 0 24 23"><path d="M12 0l3.7 7.6 8.3 1.1-6.1 5.8 1.5 8.3L12 18.8l-7.4 4 1.5-8.3L0 8.7l8.3-1.1z" fill="#f0c41b"/></svg><svg width="11.4" height="11" viewBox="0 0 24 23"><path d="M12 0l3.7 7.6 8.3 1.1-6.1 5.8 1.5 8.3L12 18.8l-7.4 4 1.5-8.3L0 8.7l8.3-1.1z" fill="#f0c41b"/></svg><svg width="11.4" height="11" viewBox="0 0 24 23"><path d="M12 0l3.7 7.6 8.3 1.1-6.1 5.8 1.5 8.3L12 18.8l-7.4 4 1.5-8.3L0 8.7l8.3-1.1z" fill="#d9d6c9"/></svg></div><div class="tt" style="top:91px">领地守卫战</div></div><div class="card" style="left:338.2px;top:313px;height:113.5px"><div class="th" style="height:64px"><div style="position:absolute;inset:0;background:#a3ddf6"></div><i style="left:-10px;top:24px;width:60px;height:30px;border-radius:50%;background:#f3f6f7"></i><i style="left:20px;top:30px;width:40px;height:22px;border-radius:50%;background:#eef3f3"></i><i style="left:82px;top:24px;width:60px;height:30px;border-radius:50%;background:#f3f6f7"></i><i style="left:72px;top:32px;width:35px;height:20px;border-radius:50%;background:#eef3f3"></i><i style="left:0px;top:38px;width:131px;height:13px;background:#e6eeec;"></i><i style="left:104px;top:40px;width:34px;height:14px;border-radius:50% 50% 0 0;background:#78b878"></i><i style="left:0px;top:45px;width:131px;height:6px;background:#88c47e;"></i><i style="left:0px;top:50.5px;width:131px;height:13.1px;background:#9b7946;"></i><i style="left:0px;top:56px;width:131px;height:2px;background:#8a6a3a;opacity:.6"></i><i style="left:30px;top:41px;width:14px;height:8px;background:#c4c8cc;clip-path:polygon(50% 0,100% 55%,100% 100%,0 100%,0 55%)"></i><i style="left:31px;top:46px;width:12px;height:4px;background:#e8eaec;"></i><i style="left:2px;top:38px;width:6px;height:12px;background:#a8aeb4;clip-path:polygon(0 0,100% 20%,100% 100%,0 100%)"></i><i style="left:91px;top:38px;width:16px;height:12px;background:#bec0c4;"></i><i style="left:98px;top:36px;width:6px;height:3px;background:#b0b2b6;"></i><i style="left:51px;top:40.5px;width:29px;height:10.5px;background:#e7cbaa;box-shadow:0 0 0 1px #a87440"></i><i style="left:50px;top:40px;width:31px;height:1.5px;background:#a87440;"></i><i style="left:54px;top:30px;width:24px;height:10px;background:#fafcff;box-shadow:0 0 0 .8px #708090"></i><i style="left:56px;top:32.5px;width:19px;height:1px;background:#556;"></i><i style="left:56px;top:35px;width:19px;height:1px;background:#556;"></i><i style="left:53px;top:43px;width:4px;height:5px;background:#d46a4a;border-radius:2px"></i><i style="left:64px;top:44px;width:5px;height:4px;background:#fff;border-radius:50%"></i><i style="left:48px;top:57px;width:40px;height:6.6px;background:#3a6bd6;"></i><i style="left:55.5px;top:52px;width:4px;height:4px;border-radius:50%;background:#2d5cc8;box-shadow:0 0 0 .5px #fff"></i><i style="left:61.0px;top:52px;width:4px;height:4px;border-radius:50%;background:#2d5cc8;box-shadow:0 0 0 .5px #fff"></i><i style="left:66.5px;top:52px;width:4px;height:4px;border-radius:50%;background:#2d5cc8;box-shadow:0 0 0 .5px #fff"></i><i style="left:72.0px;top:52px;width:4px;height:4px;border-radius:50%;background:#2d5cc8;box-shadow:0 0 0 .5px #fff"></i><i style="left:1px;top:3px;width:25px;height:2.6px;background:#4d6a80;"></i><i style="left:1px;top:6.5px;width:24px;height:2.6px;background:#4d6a80;"></i><i style="left:1px;top:11px;width:2.5px;height:2.5px;background:#8aa;"></i><i style="left:64px;top:4.5px;width:18px;height:3.5px;background:#fff;border-radius:2px"></i><i style="left:46px;top:12.5px;width:13px;height:3px;background:#fff;border-radius:2px"></i><i style="left:51px;top:21px;width:6px;height:8px;background:#2a6030;border-radius:2px"></i><i style="left:126px;top:15px;width:5px;height:7px;background:#6a4a20;"></i></div><div class="st" style="top:74px"><svg width="11.4" height="11" viewBox="0 0 24 23"><path d="M12 0l3.7 7.6 8.3 1.1-6.1 5.8 1.5 8.3L12 18.8l-7.4 4 1.5-8.3L0 8.7l8.3-1.1z" fill="#d9d6c9"/></svg><svg width="11.4" height="11" viewBox="0 0 24 23"><path d="M12 0l3.7 7.6 8.3 1.1-6.1 5.8 1.5 8.3L12 18.8l-7.4 4 1.5-8.3L0 8.7l8.3-1.1z" fill="#d9d6c9"/></svg><svg width="11.4" height="11" viewBox="0 0 24 23"><path d="M12 0l3.7 7.6 8.3 1.1-6.1 5.8 1.5 8.3L12 18.8l-7.4 4 1.5-8.3L0 8.7l8.3-1.1z" fill="#d9d6c9"/></svg><svg width="11.4" height="11" viewBox="0 0 24 23"><path d="M12 0l3.7 7.6 8.3 1.1-6.1 5.8 1.5 8.3L12 18.8l-7.4 4 1.5-8.3L0 8.7l8.3-1.1z" fill="#d9d6c9"/></svg><svg width="11.4" height="11" viewBox="0 0 24 23"><path d="M12 0l3.7 7.6 8.3 1.1-6.1 5.8 1.5 8.3L12 18.8l-7.4 4 1.5-8.3L0 8.7l8.3-1.1z" fill="#d9d6c9"/></svg></div><div class="tt" style="top:91px">小小生存对</div></div><div class="card" style="left:489.9px;top:313px;height:113.5px"><div class="th" style="height:64px"><div style="position:absolute;inset:0;background:#d5c5a8"></div><i style="left:49.5px;top:4px;width:31px;height:21px;background:#3e4a62;"></i><i style="left:49.5px;top:17px;width:12px;height:8px;background:#c07a5a;border-radius:6px 6px 0 0"></i><i style="left:55px;top:27px;width:21px;height:1.2px;background:#6a5a40;"></i><i style="left:54px;top:29.5px;width:22px;height:1.2px;background:#6a5a40;"></i></div><div class="st" style="top:74px"><svg width="11.4" height="11" viewBox="0 0 24 23"><path d="M12 0l3.7 7.6 8.3 1.1-6.1 5.8 1.5 8.3L12 18.8l-7.4 4 1.5-8.3L0 8.7l8.3-1.1z" fill="#f0c41b"/></svg><svg width="11.4" height="11" viewBox="0 0 24 23"><path d="M12 0l3.7 7.6 8.3 1.1-6.1 5.8 1.5 8.3L12 18.8l-7.4 4 1.5-8.3L0 8.7l8.3-1.1z" fill="#f0c41b"/></svg><svg width="11.4" height="11" viewBox="0 0 24 23"><path d="M12 0l3.7 7.6 8.3 1.1-6.1 5.8 1.5 8.3L12 18.8l-7.4 4 1.5-8.3L0 8.7l8.3-1.1z" fill="#f0c41b"/></svg><svg width="11.4" height="11" viewBox="0 0 24 23"><path d="M12 0l3.7 7.6 8.3 1.1-6.1 5.8 1.5 8.3L12 18.8l-7.4 4 1.5-8.3L0 8.7l8.3-1.1z" fill="#d9d6c9"/></svg><svg width="11.4" height="11" viewBox="0 0 24 23"><path d="M12 0l3.7 7.6 8.3 1.1-6.1 5.8 1.5 8.3L12 18.8l-7.4 4 1.5-8.3L0 8.7l8.3-1.1z" fill="#d9d6c9"/></svg></div><div class="tt" style="top:91px"><span class="u">重生之路</span></div></div><div class="card" style="left:641.5999999999999px;top:313px;height:113.5px"><div class="th" style="height:64px"><div style="position:absolute;inset:0;background:#000"></div></div><div class="st" style="top:74px"><svg width="11.4" height="11" viewBox="0 0 24 23"><path d="M12 0l3.7 7.6 8.3 1.1-6.1 5.8 1.5 8.3L12 18.8l-7.4 4 1.5-8.3L0 8.7l8.3-1.1z" fill="#f0c41b"/></svg><svg width="11.4" height="11" viewBox="0 0 24 23"><path d="M12 0l3.7 7.6 8.3 1.1-6.1 5.8 1.5 8.3L12 18.8l-7.4 4 1.5-8.3L0 8.7l8.3-1.1z" fill="#f0c41b"/></svg><svg width="11.4" height="11" viewBox="0 0 24 23"><path d="M12 0l3.7 7.6 8.3 1.1-6.1 5.8 1.5 8.3L12 18.8l-7.4 4 1.5-8.3L0 8.7l8.3-1.1z" fill="#d9d6c9"/></svg><svg width="11.4" height="11" viewBox="0 0 24 23"><path d="M12 0l3.7 7.6 8.3 1.1-6.1 5.8 1.5 8.3L12 18.8l-7.4 4 1.5-8.3L0 8.7l8.3-1.1z" fill="#d9d6c9"/></svg><svg width="11.4" height="11" viewBox="0 0 24 23"><path d="M12 0l3.7 7.6 8.3 1.1-6.1 5.8 1.5 8.3L12 18.8l-7.4 4 1.5-8.3L0 8.7l8.3-1.1z" fill="#d9d6c9"/></svg></div><div class="tt" style="top:91px">最强小兵</div></div><div class="card" style="left:793.3px;top:313px;height:113.5px"><div class="th" style="height:64px"><div style="position:absolute;inset:0;background:#c9c0b4"></div><i style="left:0px;top:0px;width:131px;height:17px;background:#cfc6bb;"></i><i style="left:0px;top:0px;width:5px;height:64px;background:#b5ada3;"></i><i style="left:5px;top:0px;width:22px;height:64px;background:#9e6a3c;"></i><i style="left:8px;top:0px;width:1px;height:64px;background:#8a5a30;"></i><i style="left:16px;top:0px;width:1px;height:64px;background:#8a5a30;"></i><i style="left:62px;top:0.5px;width:22px;height:6.5px;background:#4d5b58;box-shadow:0 0 0 1px #333"></i><i style="left:112px;top:0.5px;width:19px;height:6.5px;background:#4d5b58;box-shadow:0 0 0 1px #333"></i><i style="left:27px;top:17px;width:104px;height:6px;background:#2c2838;"></i><i style="left:40px;top:9px;width:11px;height:12px;border-radius:50%;background:#2f4d70"></i><i style="left:50px;top:10.5px;width:30px;height:10px;background:#e6bd4e;border-radius:2px"></i><i style="left:52.5px;top:12.5px;width:6px;height:6px;background:#5a4010;border-radius:1px"></i><i style="left:54px;top:14px;width:3px;height:3px;background:#e6bd4e;"></i><i style="left:61px;top:13px;width:12px;height:4px;background:#fff3c8;opacity:.8"></i><i style="left:13px;top:13px;width:10px;height:10px;border-radius:50%;background:#f4f4f4"></i><i style="left:27px;top:41px;width:10px;height:23px;background:#c4bbb0;"></i><i style="left:35px;top:44px;width:14px;height:20px;background:#232428;"></i><i style="left:48px;top:45px;width:20px;height:19px;background:#5e4028;"></i><i style="left:49px;top:50px;width:18px;height:1px;background:#3a2818;"></i><i style="left:49px;top:56px;width:18px;height:1px;background:#3a2818;"></i><i style="left:64px;top:45px;width:48px;height:19px;background:#c9a35f;border-radius:22px 20px 0 0"></i><i style="left:108px;top:43px;width:23px;height:21px;background:#1c1c20;"></i><i style="left:3.5px;top:22.5px;width:22px;height:17px;background:#909ed2;"></i><i style="left:3.5px;top:39px;width:22px;height:5.5px;background:#4c5496;"></i><i style="left:11.5px;top:40.8px;width:6px;height:1px;background:#aab;"></i><i style="left:29.2px;top:22.5px;width:22px;height:17px;background:#909ed2;"></i><i style="left:29.2px;top:39px;width:22px;height:5.5px;background:#4c5496;"></i><i style="left:37.2px;top:40.8px;width:6px;height:1px;background:#aab;"></i><i style="left:54.9px;top:22.5px;width:22px;height:17px;background:#909ed2;"></i><i style="left:54.9px;top:39px;width:22px;height:5.5px;background:#4c5496;"></i><i style="left:62.9px;top:40.8px;width:6px;height:1px;background:#aab;"></i><i style="left:80.6px;top:22.5px;width:22px;height:17px;background:#909ed2;"></i><i style="left:80.6px;top:39px;width:22px;height:5.5px;background:#4c5496;"></i><i style="left:88.6px;top:40.8px;width:6px;height:1px;background:#aab;"></i><i style="left:106.3px;top:22.5px;width:22px;height:17px;background:#909ed2;"></i><i style="left:106.3px;top:39px;width:22px;height:5.5px;background:#4c5496;"></i><i style="left:114.3px;top:40.8px;width:6px;height:1px;background:#aab;"></i><i style="left:25.5px;top:23px;width:2px;height:21px;background:#2a2a2a;"></i><i style="left:77.5px;top:23px;width:3px;height:21px;background:#222;"></i></div><div class="st" style="top:74px"><svg width="11.4" height="11" viewBox="0 0 24 23"><path d="M12 0l3.7 7.6 8.3 1.1-6.1 5.8 1.5 8.3L12 18.8l-7.4 4 1.5-8.3L0 8.7l8.3-1.1z" fill="#f0c41b"/></svg><svg width="11.4" height="11" viewBox="0 0 24 23"><path d="M12 0l3.7 7.6 8.3 1.1-6.1 5.8 1.5 8.3L12 18.8l-7.4 4 1.5-8.3L0 8.7l8.3-1.1z" fill="#f0c41b"/></svg><svg width="11.4" height="11" viewBox="0 0 24 23"><path d="M12 0l3.7 7.6 8.3 1.1-6.1 5.8 1.5 8.3L12 18.8l-7.4 4 1.5-8.3L0 8.7l8.3-1.1z" fill="#f0c41b"/></svg><svg width="11.4" height="11" viewBox="0 0 24 23"><path d="M12 0l3.7 7.6 8.3 1.1-6.1 5.8 1.5 8.3L12 18.8l-7.4 4 1.5-8.3L0 8.7l8.3-1.1z" fill="#f0c41b"/></svg><svg width="11.4" height="11" viewBox="0 0 24 23"><path d="M12 0l3.7 7.6 8.3 1.1-6.1 5.8 1.5 8.3L12 18.8l-7.4 4 1.5-8.3L0 8.7l8.3-1.1z" fill="#d9d6c9"/></svg></div><div class="tt" style="top:91px">男人要逆袭</div></div><div class="card" style="left:945.0px;top:313px;height:113.5px"><div class="th" style="height:64px"><div style="position:absolute;inset:0;background:#fff"></div><div style="position:absolute;left:47px;top:0;width:36px;height:64px;background:#f9efd8"><i style="left:11px;top:17px;width:15px;height:5px;background:#fdf8ee;border:1px solid #e7dcc0;border-radius:3px"></i><i style="left:15px;top:19px;width:7px;height:1.5px;background:#7a6a50;"></i></div><i style="left:129.5px;top:0px;width:1.5px;height:64px;background:#d0d0d0;"></i></div><div class="st" style="top:74px"><svg width="11.4" height="11" viewBox="0 0 24 23"><path d="M12 0l3.7 7.6 8.3 1.1-6.1 5.8 1.5 8.3L12 18.8l-7.4 4 1.5-8.3L0 8.7l8.3-1.1z" fill="#d9d6c9"/></svg><svg width="11.4" height="11" viewBox="0 0 24 23"><path d="M12 0l3.7 7.6 8.3 1.1-6.1 5.8 1.5 8.3L12 18.8l-7.4 4 1.5-8.3L0 8.7l8.3-1.1z" fill="#d9d6c9"/></svg><svg width="11.4" height="11" viewBox="0 0 24 23"><path d="M12 0l3.7 7.6 8.3 1.1-6.1 5.8 1.5 8.3L12 18.8l-7.4 4 1.5-8.3L0 8.7l8.3-1.1z" fill="#d9d6c9"/></svg><svg width="11.4" height="11" viewBox="0 0 24 23"><path d="M12 0l3.7 7.6 8.3 1.1-6.1 5.8 1.5 8.3L12 18.8l-7.4 4 1.5-8.3L0 8.7l8.3-1.1z" fill="#d9d6c9"/></svg><svg width="11.4" height="11" viewBox="0 0 24 23"><path d="M12 0l3.7 7.6 8.3 1.1-6.1 5.8 1.5 8.3L12 18.8l-7.4 4 1.5-8.3L0 8.7l8.3-1.1z" fill="#d9d6c9"/></svg></div><div class="tt" style="top:91px">疯狂爱烧脑</div></div><div class="lm"><span>Load more games</span><svg style="position:absolute;left:95px;top:9px" width="10" height="8" viewBox="0 0 10 8"><path d="M1.2 1.5L5 5.5 8.8 1.5" fill="none" stroke="#fff" stroke-width="2.2"/></svg></div><svg style="position:absolute;left:188px;top:508.5px" width="14.4" height="14.4"><polygon points="7.20,-0.10 8.62,1.89 10.85,0.88 11.09,3.31 13.52,3.55 12.51,5.78 14.50,7.20 12.51,8.62 13.52,10.85 11.09,11.09 10.85,13.52 8.62,12.51 7.20,14.50 5.78,12.51 3.55,13.52 3.31,11.09 0.88,10.85 1.89,8.62 -0.10,7.20 1.89,5.78 0.88,3.55 3.31,3.31 3.55,0.88 5.78,1.89" fill="#2c3e50"/></svg><div class="h" style="left:209px;top:507.5px;letter-spacing:-0.4px">POPULAR GAMES</div><div class="hr" style="top:532px"></div><div class="card" style="left:186.5px;top:545px;height:113.5px"><div class="th" style="height:64px"><div style="position:absolute;inset:0;background:#000"></div><i style="left:17px;top:0px;width:98px;height:63.6px;background:#272323;"></i><i style="left:17px;top:0px;width:98px;height:63.6px;background:repeating-linear-gradient(28deg,transparent 0 12px,#151313 12px 14px),repeating-linear-gradient(-28deg,transparent 0 12px,#151313 12px 14px);opacity:.75"></i><i style="left:17px;top:0px;width:98px;height:63.6px;background:radial-gradient(ellipse at 40% 40%,rgba(80,70,50,.25),transparent 60%);"></i><i style="left:50px;top:20px;width:16px;height:10px;background:#4a4a2a;opacity:.5;border-radius:50%"></i><i style="left:50.5px;top:39.6px;width:29px;height:8.4px;background:#d9e4ee;"></i><i style="left:52px;top:41.5px;width:14px;height:1px;background:#556;"></i><i style="left:53px;top:31px;width:6px;height:8.5px;background:#c84545;border-radius:3px 3px 0 0"></i><i style="left:54.5px;top:29.5px;width:3px;height:3px;background:#f0d0c0;border-radius:50%"></i><i style="left:34.5px;top:10.5px;width:5px;height:5px;background:#fff;border-radius:50%"></i><i style="left:1px;top:1.5px;width:14px;height:2px;background:#3a3a3a;"></i><i style="left:1px;top:4.5px;width:8px;height:1.5px;background:#333;"></i><i style="left:123px;top:15px;width:5px;height:5px;background:#2a2a1a;border-radius:50%"></i><i style="left:123px;top:27px;width:5px;height:5px;background:#222;border-radius:50%"></i><i style="left:123px;top:33px;width:5px;height:5px;background:#222;border-radius:50%"></i><i style="left:40px;top:60px;width:50px;height:3.6px;background:#1e2a2a;"></i></div><div class="st" style="top:74px"><svg width="11.4" height="11" viewBox="0 0 24 23"><path d="M12 0l3.7 7.6 8.3 1.1-6.1 5.8 1.5 8.3L12 18.8l-7.4 4 1.5-8.3L0 8.7l8.3-1.1z" fill="#f0c41b"/></svg><svg width="11.4" height="11" viewBox="0 0 24 23"><path d="M12 0l3.7 7.6 8.3 1.1-6.1 5.8 1.5 8.3L12 18.8l-7.4 4 1.5-8.3L0 8.7l8.3-1.1z" fill="#f0c41b"/></svg><svg width="11.4" height="11" viewBox="0 0 24 23"><path d="M12 0l3.7 7.6 8.3 1.1-6.1 5.8 1.5 8.3L12 18.8l-7.4 4 1.5-8.3L0 8.7l8.3-1.1z" fill="#f0c41b"/></svg><svg width="11.4" height="11" viewBox="0 0 24 23"><path d="M12 0l3.7 7.6 8.3 1.1-6.1 5.8 1.5 8.3L12 18.8l-7.4 4 1.5-8.3L0 8.7l8.3-1.1z" fill="#f0c41b"/></svg><svg width="11.4" height="11" viewBox="0 0 24 23"><path d="M12 0l3.7 7.6 8.3 1.1-6.1 5.8 1.5 8.3L12 18.8l-7.4 4 1.5-8.3L0 8.7l8.3-1.1z" fill="#f0c41b"/></svg></div><div class="tt" style="top:91px">末日庇护所</div></div><div class="card" style="left:338.2px;top:545px;height:113.5px"><div class="th" style="height:64px"><div style="position:absolute;inset:0;background:#fff"></div><i style="left:1.5px;top:2px;width:128px;height:0.8px;background:#aaa;"></i><i style="left:3px;top:4.5px;width:20px;height:0.8px;background:#d08aa0;"></i><i style="left:3px;top:6px;width:28px;height:0.8px;background:#c0a0b0;"></i><i style="left:3px;top:7.5px;width:26px;height:0.8px;background:#b0b0c0;"></i><i style="left:3px;top:9px;width:36px;height:0.8px;background:#bbb;"></i></div><div class="st" style="top:74px"><svg width="11.4" height="11" viewBox="0 0 24 23"><path d="M12 0l3.7 7.6 8.3 1.1-6.1 5.8 1.5 8.3L12 18.8l-7.4 4 1.5-8.3L0 8.7l8.3-1.1z" fill="#f0c41b"/></svg><svg width="11.4" height="11" viewBox="0 0 24 23"><path d="M12 0l3.7 7.6 8.3 1.1-6.1 5.8 1.5 8.3L12 18.8l-7.4 4 1.5-8.3L0 8.7l8.3-1.1z" fill="#f0c41b"/></svg><svg width="11.4" height="11" viewBox="0 0 24 23"><path d="M12 0l3.7 7.6 8.3 1.1-6.1 5.8 1.5 8.3L12 18.8l-7.4 4 1.5-8.3L0 8.7l8.3-1.1z" fill="#f0c41b"/></svg><svg width="11.4" height="11" viewBox="0 0 24 23"><path d="M12 0l3.7 7.6 8.3 1.1-6.1 5.8 1.5 8.3L12 18.8l-7.4 4 1.5-8.3L0 8.7l8.3-1.1z" fill="#d9d6c9"/></svg><svg width="11.4" height="11" viewBox="0 0 24 23"><path d="M12 0l3.7 7.6 8.3 1.1-6.1 5.8 1.5 8.3L12 18.8l-7.4 4 1.5-8.3L0 8.7l8.3-1.1z" fill="#d9d6c9"/></svg></div><div class="tt" style="top:91px">空白</div></div><div class="card" style="left:489.9px;top:545px;height:146.5px"><div class="th" style="height:97px"><div style="position:absolute;inset:0;background:#f4f5f7"></div><i style="left:1.5px;top:1px;width:127.5px;height:94.5px;background:#fff;box-shadow:0 0 0 1px #e9ebee"></i><i style="left:55.5px;top:6px;width:20px;height:3px;background:#555;opacity:.85"></i><i style="left:7px;top:14px;width:10px;height:1.2px;background:#aaa;"></i><i style="left:17px;top:14px;width:4px;height:1.2px;background:#9c9;"></i><i style="left:32px;top:14px;width:8px;height:1.2px;background:#aaa;"></i><i style="left:40px;top:14px;width:6px;height:1.2px;background:#e88;"></i><i style="left:55px;top:13.8px;width:10px;height:1.2px;background:#aaa;"></i><i style="left:67px;top:12.8px;width:17px;height:3.5px;background:#fff;box-shadow:0 0 0 .6px #bbb"></i><i style="left:96.7px;top:13.4px;width:26px;height:3.3px;background:#9a9fa3;border-radius:1px"></i><i style="left:40px;top:20.7px;width:20px;height:3.4px;background:#2ecc71;border-radius:1px"></i><i style="left:62.4px;top:20.7px;width:28.7px;height:3.4px;background:#3498db;border-radius:1px"></i><svg style="position:absolute;left:26.6px;top:26.3px" width="77.7" height="46.7" viewBox="0 0 77.7 46.7"><rect width="77.7" height="46.7" fill="#fff"/><line x1="8.63" y1="0" x2="8.63" y2="46.7" stroke="#e3e6ea" stroke-width=".7"/><line x1="0" y1="5.19" x2="77.7" y2="5.19" stroke="#e3e6ea" stroke-width=".7"/><line x1="17.27" y1="0" x2="17.27" y2="46.7" stroke="#e3e6ea" stroke-width=".7"/><line x1="0" y1="10.38" x2="77.7" y2="10.38" stroke="#e3e6ea" stroke-width=".7"/><line x1="25.90" y1="0" x2="25.90" y2="46.7" stroke="#c9ced6" stroke-width=".7"/><line x1="0" y1="15.57" x2="77.7" y2="15.57" stroke="#c9ced6" stroke-width=".7"/><line x1="34.53" y1="0" x2="34.53" y2="46.7" stroke="#e3e6ea" stroke-width=".7"/><line x1="0" y1="20.76" x2="77.7" y2="20.76" stroke="#e3e6ea" stroke-width=".7"/><line x1="43.17" y1="0" x2="43.17" y2="46.7" stroke="#e3e6ea" stroke-width=".7"/><line x1="0" y1="25.94" x2="77.7" y2="25.94" stroke="#e3e6ea" stroke-width=".7"/><line x1="51.80" y1="0" x2="51.80" y2="46.7" stroke="#c9ced6" stroke-width=".7"/><line x1="0" y1="31.13" x2="77.7" y2="31.13" stroke="#c9ced6" stroke-width=".7"/><line x1="60.43" y1="0" x2="60.43" y2="46.7" stroke="#e3e6ea" stroke-width=".7"/><line x1="0" y1="36.32" x2="77.7" y2="36.32" stroke="#e3e6ea" stroke-width=".7"/><line x1="69.07" y1="0" x2="69.07" y2="46.7" stroke="#e3e6ea" stroke-width=".7"/><line x1="0" y1="41.51" x2="77.7" y2="41.51" stroke="#e3e6ea" stroke-width=".7"/><rect x="0.6" y="0.6" width="76.5" height="45.5" fill="none" stroke="#2c3e50" stroke-width="1.3"/><rect x="3.50" y="2.00" width="1.6" height="1.4" fill="#9a9a9a"/><rect x="12.13" y="2.00" width="1.6" height="1.4" fill="#9a9a9a"/><rect x="29.40" y="2.00" width="1.6" height="1.4" fill="#9a9a9a"/><rect x="38.03" y="2.00" width="1.6" height="1.4" fill="#9a9a9a"/><rect x="46.67" y="2.00" width="1.6" height="1.4" fill="#9a9a9a"/><rect x="55.30" y="2.00" width="1.6" height="1.4" fill="#9a9a9a"/><rect x="63.93" y="2.00" width="1.6" height="1.4" fill="#9a9a9a"/><rect x="72.57" y="2.00" width="1.6" height="1.4" fill="#9a9a9a"/><rect x="3.50" y="7.19" width="1.6" height="1.4" fill="#9a9a9a"/><rect x="12.13" y="7.19" width="1.6" height="1.4" fill="#9a9a9a"/><rect x="20.77" y="7.19" width="1.6" height="1.4" fill="#9a9a9a"/><rect x="29.40" y="7.19" width="1.6" height="1.4" fill="#9a9a9a"/><rect x="46.67" y="7.19" width="1.6" height="1.4" fill="#9a9a9a"/><rect x="55.30" y="7.19" width="1.6" height="1.4" fill="#9a9a9a"/><rect x="12.13" y="12.38" width="1.6" height="1.4" fill="#9a9a9a"/><rect x="29.40" y="12.38" width="1.6" height="1.4" fill="#9a9a9a"/><rect x="46.67" y="12.38" width="1.6" height="1.4" fill="#9a9a9a"/><rect x="55.30" y="12.38" width="1.6" height="1.4" fill="#9a9a9a"/><rect x="63.93" y="12.38" width="1.6" height="1.4" fill="#9a9a9a"/><rect x="72.57" y="12.38" width="1.6" height="1.4" fill="#9a9a9a"/><rect x="12.13" y="17.57" width="1.6" height="1.4" fill="#9a9a9a"/><rect x="38.03" y="17.57" width="1.6" height="1.4" fill="#9a9a9a"/><rect x="46.67" y="17.57" width="1.6" height="1.4" fill="#9a9a9a"/><rect x="55.30" y="17.57" width="1.6" height="1.4" fill="#9a9a9a"/><rect x="63.93" y="17.57" width="1.6" height="1.4" fill="#9a9a9a"/><rect x="72.57" y="17.57" width="1.6" height="1.4" fill="#9a9a9a"/><rect x="12.13" y="22.76" width="1.6" height="1.4" fill="#9a9a9a"/><rect x="20.77" y="22.76" width="1.6" height="1.4" fill="#9a9a9a"/><rect x="38.03" y="22.76" width="1.6" height="1.4" fill="#9a9a9a"/><rect x="46.67" y="22.76" width="1.6" height="1.4" fill="#9a9a9a"/><rect x="72.57" y="22.76" width="1.6" height="1.4" fill="#9a9a9a"/><rect x="12.13" y="27.94" width="1.6" height="1.4" fill="#9a9a9a"/><rect x="38.03" y="27.94" width="1.6" height="1.4" fill="#9a9a9a"/><rect x="55.30" y="27.94" width="1.6" height="1.4" fill="#9a9a9a"/><rect x="63.93" y="27.94" width="1.6" height="1.4" fill="#9a9a9a"/><rect x="3.50" y="33.13" width="1.6" height="1.4" fill="#9a9a9a"/><rect x="12.13" y="33.13" width="1.6" height="1.4" fill="#9a9a9a"/><rect x="20.77" y="33.13" width="1.6" height="1.4" fill="#9a9a9a"/><rect x="63.93" y="33.13" width="1.6" height="1.4" fill="#9a9a9a"/><rect x="20.77" y="38.32" width="1.6" height="1.4" fill="#9a9a9a"/><rect x="46.67" y="38.32" width="1.6" height="1.4" fill="#9a9a9a"/><rect x="63.93" y="38.32" width="1.6" height="1.4" fill="#9a9a9a"/><rect x="29.40" y="43.51" width="1.6" height="1.4" fill="#9a9a9a"/><rect x="38.03" y="43.51" width="1.6" height="1.4" fill="#9a9a9a"/><rect x="55.30" y="43.51" width="1.6" height="1.4" fill="#9a9a9a"/><rect x="63.93" y="43.51" width="1.6" height="1.4" fill="#9a9a9a"/><rect x="72.57" y="43.51" width="1.6" height="1.4" fill="#9a9a9a"/></svg><i style="left:27.7px;top:77px;width:13px;height:3.8px;background:#eceef1;border-radius:1px"></i><i style="left:42.9px;top:77px;width:13px;height:3.8px;background:#eceef1;border-radius:1px"></i><i style="left:58.099999999999994px;top:77px;width:13px;height:3.8px;background:#eceef1;border-radius:1px"></i><i style="left:73.3px;top:77px;width:13px;height:3.8px;background:#eceef1;border-radius:1px"></i><i style="left:88.5px;top:77px;width:13px;height:3.8px;background:#eceef1;border-radius:1px"></i><i style="left:27.7px;top:82.5px;width:13px;height:4px;background:#eceef1;border-radius:1px"></i><i style="left:42.9px;top:82.5px;width:13px;height:4px;background:#eceef1;border-radius:1px"></i><i style="left:58.099999999999994px;top:82.5px;width:13px;height:4px;background:#eceef1;border-radius:1px"></i><i style="left:73.3px;top:82.5px;width:13px;height:4px;background:#eceef1;border-radius:1px"></i><i style="left:27.7px;top:87.9px;width:29px;height:3.1px;background:#e74c3c;border-radius:1px"></i></div><div class="st" style="top:107px"><svg width="11.4" height="11" viewBox="0 0 24 23"><path d="M12 0l3.7 7.6 8.3 1.1-6.1 5.8 1.5 8.3L12 18.8l-7.4 4 1.5-8.3L0 8.7l8.3-1.1z" fill="#f0c41b"/></svg><svg width="11.4" height="11" viewBox="0 0 24 23"><path d="M12 0l3.7 7.6 8.3 1.1-6.1 5.8 1.5 8.3L12 18.8l-7.4 4 1.5-8.3L0 8.7l8.3-1.1z" fill="#f0c41b"/></svg><svg width="11.4" height="11" viewBox="0 0 24 23"><path d="M12 0l3.7 7.6 8.3 1.1-6.1 5.8 1.5 8.3L12 18.8l-7.4 4 1.5-8.3L0 8.7l8.3-1.1z" fill="#f0c41b"/></svg><svg width="11.4" height="11" viewBox="0 0 24 23"><path d="M12 0l3.7 7.6 8.3 1.1-6.1 5.8 1.5 8.3L12 18.8l-7.4 4 1.5-8.3L0 8.7l8.3-1.1z" fill="#f0c41b"/></svg><svg width="11.4" height="11" viewBox="0 0 24 23"><path d="M12 0l3.7 7.6 8.3 1.1-6.1 5.8 1.5 8.3L12 18.8l-7.4 4 1.5-8.3L0 8.7l8.3-1.1z" fill="#f0c41b"/></svg></div><div class="tt" style="top:124px">数独也疯狂</div></div><div class="card" style="left:641.5999999999999px;top:545px;height:113.5px"><div class="th" style="height:64px"><div style="position:absolute;inset:0;background:#416c2a"></div><i style="left:-4px;top:-6px;width:26px;height:22px;border-radius:50%;background:#4a7530"></i><i style="left:2px;top:36px;width:26px;height:24px;border-radius:50%;background:#3a6226"></i><i style="left:40.5px;top:0px;width:50px;height:64px;background:#7b6843;"></i><i style="left:40.5px;top:0px;width:2px;height:64px;background:#6a5a36;"></i><i style="left:94px;top:22px;width:16px;height:18px;border-radius:50%;background:#36601f;box-shadow:0 0 0 1px #2d5019"></i><i style="left:104px;top:40px;width:20px;height:20px;border-radius:50%;background:#3a6424"></i><i style="left:0px;top:9.8px;width:29px;height:10.5px;background:#283466;border-radius:2px;box-shadow:0 0 0 1px #1a1f30"></i><i style="left:3.5px;top:12.5px;width:5px;height:5px;border-radius:50% 50% 50% 0;background:#3aa0e8"></i><i style="left:11px;top:13px;width:2.5px;height:4px;background:#ccc;border-radius:1px"></i><i style="left:4.5px;top:24.6px;width:23.5px;height:11.2px;background:#b42a2a;border-radius:2px;box-shadow:0 0 0 1px #5a1a1a"></i><i style="left:8px;top:27.5px;width:16px;height:1.5px;background:#e8a0a0;"></i><i style="left:11px;top:31px;width:10px;height:1.5px;background:#e8a0a0;"></i><div style="position:absolute;left:22.8px;top:44.6px;width:61px;height:22px;background:#fff;border-radius:4px;box-shadow:0 0 0 1px #222;font-size:6px;line-height:6.2px;color:#111;padding:2px 0 0 2.5px;font-weight:bold;letter-spacing:-.1px;overflow:hidden;white-space:nowrap">我的城堡正在被一群怪<br>物攻击,打起精神,加入<br>战斗!!</div><svg style="position:absolute;left:95.5px;top:53.5px" width="12" height="8" viewBox="0 0 12 8"><path d="M0 1.5l3 3 3-4.5 3 4.5 3-3V8H0z" fill="#f5d21a" stroke="#3a2a00" stroke-width=".6"/></svg><i style="left:120.5px;top:0.5px;width:9px;height:9px;background:#b6b6b6;box-shadow:0 0 0 1px #2a2a2a"></i><i style="left:120.5px;top:12.5px;width:9px;height:9px;background:#b6b6b6;box-shadow:0 0 0 1px #2a2a2a"></i><i style="left:120.5px;top:24.5px;width:9px;height:9px;background:#b6b6b6;box-shadow:0 0 0 1px #2a2a2a"></i></div><div class="st" style="top:74px"><svg width="11.4" height="11" viewBox="0 0 24 23"><path d="M12 0l3.7 7.6 8.3 1.1-6.1 5.8 1.5 8.3L12 18.8l-7.4 4 1.5-8.3L0 8.7l8.3-1.1z" fill="#f0c41b"/></svg><svg width="11.4" height="11" viewBox="0 0 24 23"><path d="M12 0l3.7 7.6 8.3 1.1-6.1 5.8 1.5 8.3L12 18.8l-7.4 4 1.5-8.3L0 8.7l8.3-1.1z" fill="#f0c41b"/></svg><svg width="11.4" height="11" viewBox="0 0 24 23"><path d="M12 0l3.7 7.6 8.3 1.1-6.1 5.8 1.5 8.3L12 18.8l-7.4 4 1.5-8.3L0 8.7l8.3-1.1z" fill="#f0c41b"/></svg><svg width="11.4" height="11" viewBox="0 0 24 23"><path d="M12 0l3.7 7.6 8.3 1.1-6.1 5.8 1.5 8.3L12 18.8l-7.4 4 1.5-8.3L0 8.7l8.3-1.1z" fill="#f0c41b"/></svg><svg width="11.4" height="11" viewBox="0 0 24 23"><path d="M12 0l3.7 7.6 8.3 1.1-6.1 5.8 1.5 8.3L12 18.8l-7.4 4 1.5-8.3L0 8.7l8.3-1.1z" fill="#d9d6c9"/></svg></div><div class="tt" style="top:91px">领地守卫战</div></div><div class="card" style="left:793.3px;top:545px;height:113.5px"><div class="th" style="height:64px"><div style="position:absolute;inset:0;background:#000"></div></div><div class="st" style="top:74px"><svg width="11.4" height="11" viewBox="0 0 24 23"><path d="M12 0l3.7 7.6 8.3 1.1-6.1 5.8 1.5 8.3L12 18.8l-7.4 4 1.5-8.3L0 8.7l8.3-1.1z" fill="#f0c41b"/></svg><svg width="11.4" height="11" viewBox="0 0 24 23"><path d="M12 0l3.7 7.6 8.3 1.1-6.1 5.8 1.5 8.3L12 18.8l-7.4 4 1.5-8.3L0 8.7l8.3-1.1z" fill="#f0c41b"/></svg><svg width="11.4" height="11" viewBox="0 0 24 23"><path d="M12 0l3.7 7.6 8.3 1.1-6.1 5.8 1.5 8.3L12 18.8l-7.4 4 1.5-8.3L0 8.7l8.3-1.1z" fill="#d9d6c9"/></svg><svg width="11.4" height="11" viewBox="0 0 24 23"><path d="M12 0l3.7 7.6 8.3 1.1-6.1 5.8 1.5 8.3L12 18.8l-7.4 4 1.5-8.3L0 8.7l8.3-1.1z" fill="#d9d6c9"/></svg><svg width="11.4" height="11" viewBox="0 0 24 23"><path d="M12 0l3.7 7.6 8.3 1.1-6.1 5.8 1.5 8.3L12 18.8l-7.4 4 1.5-8.3L0 8.7l8.3-1.1z" fill="#d9d6c9"/></svg></div><div class="tt" style="top:91px">最强小兵</div></div><div class="card" style="left:945.0px;top:545px;height:113.5px"><div class="th" style="height:64px"><div style="position:absolute;inset:0;background:#4fb48b"></div><i style="left:105px;top:25px;width:24px;height:20px;background:#3f8470;opacity:.7;transform:skewX(-30deg)"></i><i style="left:58px;top:2px;width:22px;height:14px;background:#3e8a74;opacity:.6"></i><i style="left:2px;top:14px;width:12px;height:10px;background:#cfe8e0;border-radius:50%;opacity:.7"></i><i style="left:95px;top:10px;width:16px;height:8px;background:#dce8e4;border-radius:50%;opacity:.8"></i><i style="left:14px;top:15px;width:102px;height:32px;background:#f2efe6;border-radius:7px"></i><i style="left:16px;top:17px;width:98px;height:28px;background:#7c2412;border-radius:5px"></i><i style="left:19px;top:20px;width:16px;height:11px;background:#f3ab30;border-radius:3px"></i><i style="left:24px;top:22px;width:6px;height:6px;background:#ffd850;"></i><i style="left:38px;top:19px;width:14px;height:12px;background:#f5b634;border-radius:3px"></i><i style="left:41px;top:21px;width:7px;height:7px;background:#ffd850;"></i><i style="left:54px;top:21px;width:14px;height:10px;background:#f3ab30;border-radius:3px"></i><i style="left:57px;top:23px;width:7px;height:5px;background:#ffd850;"></i><i style="left:68px;top:24px;width:18px;height:7px;background:#b83a28;border-radius:2px"></i><i style="left:72px;top:25px;width:8px;height:4px;background:#f0e6dc;"></i><i style="left:86px;top:19px;width:26px;height:12px;background:#e9b93a;border-radius:3px"></i><i style="left:92px;top:21px;width:14px;height:6px;background:#c8c4bc;"></i><i style="left:20px;top:38px;width:92px;height:7px;background:#e08a2a;border-radius:2px"></i><i style="left:26px;top:41px;width:80px;height:3.6px;background:#5a3430;opacity:.85"></i><i style="left:36px;top:1px;width:14px;height:18px;background:#6f7f8c;transform:skewX(-24deg)"></i><i style="left:60px;top:3px;width:18px;height:16px;background:#e3c638;transform:skewX(-18deg);border-radius:2px"></i><i style="left:64px;top:6px;width:9px;height:6px;background:#ffe468;transform:skewX(-18deg)"></i><i style="left:11px;top:31.6px;width:101px;height:5.8px;background:#7fd552;box-shadow:0 0 0 1px #1d3a12;border-radius:1px"></i><i style="left:113px;top:30px;width:9.8px;height:7.8px;border-radius:50%;background:#eb9640;box-shadow:0 0 0 1px #7a3010"></i><i style="left:45px;top:47.5px;width:28px;height:2.6px;background:#fff;opacity:.55"></i><i style="left:18px;top:51.5px;width:92px;height:2.4px;background:#f0f6ea;opacity:.72"></i><i style="left:18px;top:56.5px;width:92px;height:2.4px;background:#f0f6ea;opacity:.72"></i><i style="left:8px;top:42px;width:14px;height:11px;background:#d4a22a;border-radius:40%"></i><i style="left:4px;top:51px;width:12px;height:7px;background:#e4cea2;transform:skewX(-30deg)"></i><i style="left:5px;top:20px;width:4px;height:6px;background:#c83020;border-radius:50%"></i><i style="left:94px;top:44px;width:7px;height:7px;background:#c23a22;border-radius:50%"></i><i style="left:28px;top:58px;width:10px;height:6px;background:#e8b030;border-radius:50%"></i><i style="left:106.5px;top:58.2px;width:18px;height:5.4px;background:#f0a030;"></i></div><div class="st" style="top:74px"><svg width="11.4" height="11" viewBox="0 0 24 23"><path d="M12 0l3.7 7.6 8.3 1.1-6.1 5.8 1.5 8.3L12 18.8l-7.4 4 1.5-8.3L0 8.7l8.3-1.1z" fill="#f0c41b"/></svg><svg width="11.4" height="11" viewBox="0 0 24 23"><path d="M12 0l3.7 7.6 8.3 1.1-6.1 5.8 1.5 8.3L12 18.8l-7.4 4 1.5-8.3L0 8.7l8.3-1.1z" fill="#f0c41b"/></svg><svg width="11.4" height="11" viewBox="0 0 24 23"><path d="M12 0l3.7 7.6 8.3 1.1-6.1 5.8 1.5 8.3L12 18.8l-7.4 4 1.5-8.3L0 8.7l8.3-1.1z" fill="#f0c41b"/></svg><svg width="11.4" height="11" viewBox="0 0 24 23"><path d="M12 0l3.7 7.6 8.3 1.1-6.1 5.8 1.5 8.3L12 18.8l-7.4 4 1.5-8.3L0 8.7l8.3-1.1z" fill="#d9d6c9"/></svg><svg width="11.4" height="11" viewBox="0 0 24 23"><path d="M12 0l3.7 7.6 8.3 1.1-6.1 5.8 1.5 8.3L12 18.8l-7.4 4 1.5-8.3L0 8.7l8.3-1.1z" fill="#d9d6c9"/></svg></div><div class="tt" style="top:91px">披萨工厂</div></div><div class="sb"><svg style="position:absolute;left:1.3px;top:3.5px" width="7" height="5"><path d="M3.5 0.5L6.5 4.5H0.5z" fill="#555"/></svg><i style="left:7px;top:-4px;width:7px;height:7px;border-radius:50%;background:#444"></i><i style="left:2px;top:13px;width:6px;height:339px;border-radius:3px;background:#8a8a8a"></i></div></body></html>
